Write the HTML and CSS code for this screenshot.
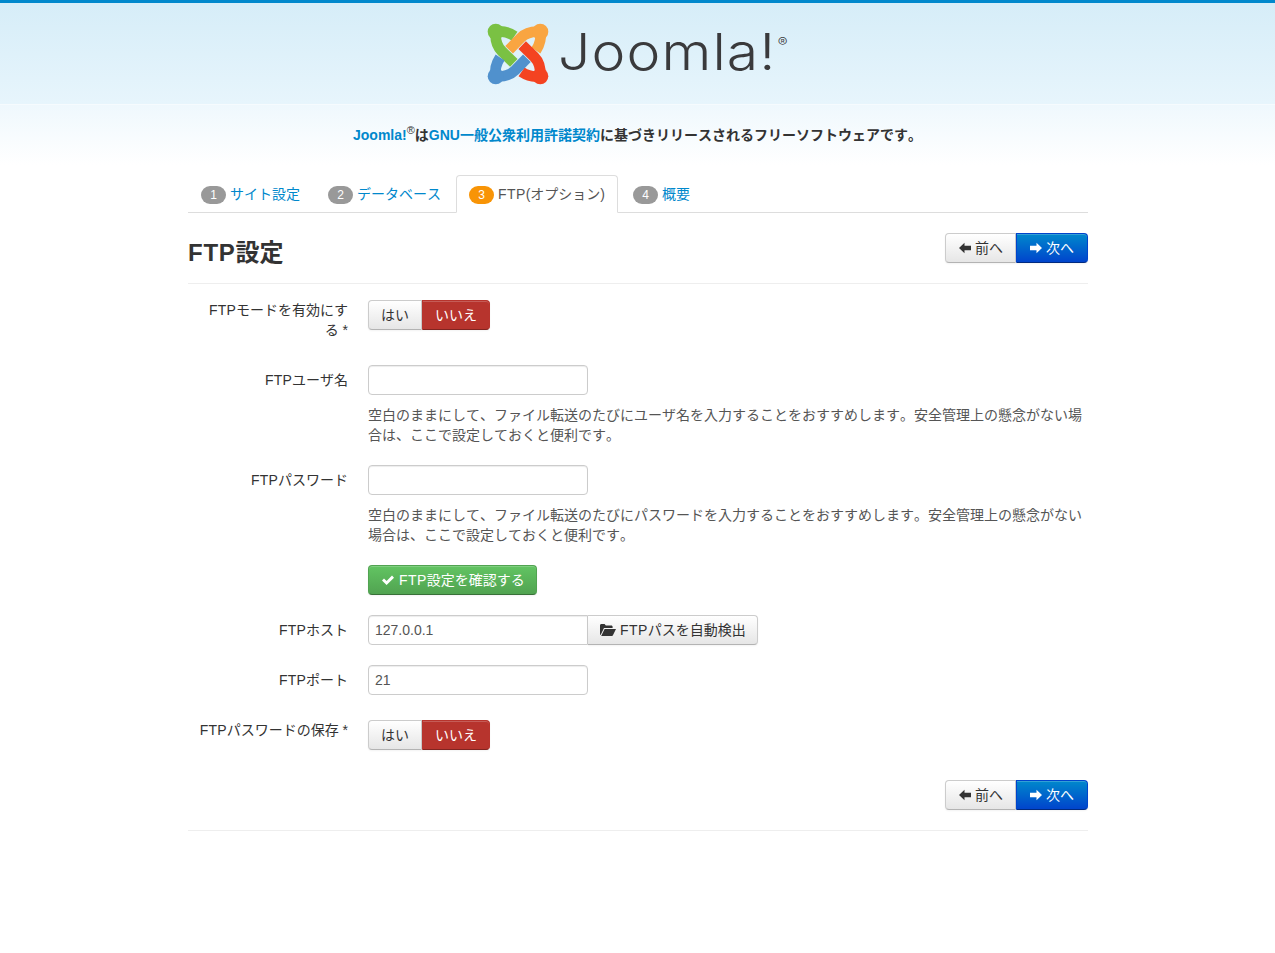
FILE: index.html
```html
<!DOCTYPE html>
<html lang="ja">
<head>
<meta charset="utf-8">
<title>Joomla! Web Installer</title>
<link rel="stylesheet" href="styles.css">
</head>
<body>
<header class="header">
  <div class="logo">
    <svg class="logo-mark" viewBox="0 0 227 227" width="76" height="76" aria-hidden="true">
      <defs>
        <g id="hook" fill="none" stroke="currentColor" stroke-width="32">
          <path d="M47,47 Q44,84 65,105 L101,140"/>
          <path d="M47,47 Q76,42 103,60"/>
          <circle cx="47" cy="47" r="24" fill="currentColor" stroke="none"/>
        </g>
      </defs>
      <use href="#hook" color="#7ac143"/>
      <use href="#hook" color="#f9a541" transform="rotate(90 113.5 113.5)"/>
      <use href="#hook" color="#f44321" transform="rotate(180 113.5 113.5)"/>
      <use href="#hook" color="#5091cd" transform="rotate(270 113.5 113.5)"/>
    </svg>
    <span class="wordmark">Joomla!<sup class="wordmark-reg">®</sup></span>
  </div>
</header>
<div class="notice">
  <p class="notice-text"><a href="#">Joomla!</a><sup class="reg">®</sup>は<a href="#">GNU一般公衆利用許諾契約</a>に基づきリリースされるフリーソフトウェアです。</p>
</div>
<main class="container">
  <ul class="tabs">
    <li class="tab"><a href="#"><span class="badge">1</span>サイト設定</a></li>
    <li class="tab"><a href="#"><span class="badge">2</span>データベース</a></li>
    <li class="tab tab-active"><a href="#"><span class="badge badge-warning">3</span><span class="ftp">FTP</span>(オプション)</a></li>
    <li class="tab"><a href="#"><span class="badge">4</span>概要</a></li>
  </ul>

  <div class="title-row">
    <h3 class="title"><span class="ftp">FTP</span>設定</h3>
    <div class="btn-group">
      <a class="btn" href="#"><svg class="icon" viewBox="0 0 14 14"><path d="M6.5 1.8 1 7l5.500 5.200V9.200H13V4.800H6.500z"/></svg>前へ</a>
      <a class="btn btn-primary" href="#"><svg class="icon" viewBox="0 0 14 14"><path d="M7.500 1.800 13 7l-5.500 5.200V9.200H1V4.800h6.500z"/></svg>次へ</a>
    </div>
  </div>
  <hr class="rule rule-top">

  <div class="group group-toggle">
    <label class="label"><span class="ftp">FTP</span>モードを有効にする&nbsp;*</label>
    <div class="controls">
      <div class="btn-group">
        <a class="btn btn-toggle" href="#">はい</a>
        <a class="btn btn-toggle btn-danger" href="#">いいえ</a>
      </div>
    </div>
  </div>

  <div class="group">
    <label class="label"><span class="ftp">FTP</span>ユーザ名</label>
    <div class="controls">
      <input class="input" type="text">
      <p class="help">空白のままにして、ファイル転送のたびにユーザ名を入力することをおすすめします。安全管理上の懸念がない場合は、ここで設定しておくと便利です。</p>
    </div>
  </div>

  <div class="group">
    <label class="label"><span class="ftp">FTP</span>パスワード</label>
    <div class="controls">
      <input class="input" type="text">
      <p class="help">空白のままにして、ファイル転送のたびにパスワードを入力することをおすすめします。安全管理上の懸念がない場合は、ここで設定しておくと便利です。</p>
    </div>
  </div>

  <div class="group">
    <div class="controls">
      <a class="btn btn-success" href="#"><svg class="icon icon-wide" viewBox="0 0 14 14"><path d="M1 7.600 3 5.500l2.600 2.600L11 2.600l2 2.100-7.400 7.400z"/></svg><span class="ftp">FTP</span>設定を確認する</a>
    </div>
  </div>

  <div class="group">
    <label class="label"><span class="ftp">FTP</span>ホスト</label>
    <div class="controls">
      <div class="input-append">
        <input class="input input-joined" type="text" value="127.0.0.1">
        <a class="btn btn-joined" href="#"><svg class="icon icon-folder" viewBox="0 0 16 14"><path d="M0 2.500C0 1.700.6 1 1.400 1h3.200l1.200 1.500h5.500c.8 0 1.300.6 1.300 1.300V5H4L.6 12 0 11.500zM4.600 6H16l-3.200 6.600c-.2.3-.5.4-.8.4H1.200z"/></svg><span class="ftp">FTP</span>パスを自動検出</a>
      </div>
    </div>
  </div>

  <div class="group">
    <label class="label"><span class="ftp">FTP</span>ポート</label>
    <div class="controls">
      <input class="input" type="text" value="21">
    </div>
  </div>

  <div class="group group-toggle group-last">
    <label class="label"><span class="ftp">FTP</span>パスワードの保存&nbsp;*</label>
    <div class="controls">
      <div class="btn-group">
        <a class="btn btn-toggle" href="#">はい</a>
        <a class="btn btn-toggle btn-danger" href="#">いいえ</a>
      </div>
    </div>
  </div>

  <div class="actions">
    <div class="btn-group">
      <a class="btn" href="#"><svg class="icon" viewBox="0 0 14 14"><path d="M6.500 1.800 1 7l5.500 5.200V9.200H13V4.800H6.500z"/></svg>前へ</a>
      <a class="btn btn-primary" href="#"><svg class="icon" viewBox="0 0 14 14"><path d="M7.500 1.800 13 7l-5.500 5.200V9.200H1V4.800h6.500z"/></svg>次へ</a>
    </div>
  </div>
  <hr class="rule rule-bottom">
</main>
</body>
</html>
```
FILE: styles.css
```css
* { box-sizing: border-box; }
html, body { margin: 0; padding: 0; }
body {
  font-family: "Liberation Sans", "Noto Sans CJK JP", sans-serif;
  font-size: 14px;
  line-height: 20px;
  color: #333;
  background: #fff;
  font-kerning: none;
}
a { text-decoration: none; color: #0088cc; }
.ftp { letter-spacing: .03em; }
.label .ftp { letter-spacing: .012em; }

.header {
  height: 105px;
  border-top: 3px solid #0088cc;
  border-bottom: 1px solid #f6fbfe;
  background: linear-gradient(#d6edf8, #e7f5fc);
  display: flex;
  justify-content: center;
}
.logo { display: flex; align-items: flex-start; width: 301px; }
.logo-mark { margin: 13px 0 0 -7px; flex: none; }
.wordmark {
  font-family: "Inter", sans-serif;
  font-weight: 350;
  font-size: 51px;
  line-height: 60px;
  color: #3a3a3c;
  margin: 19px 0 0 2px;
  letter-spacing: 1px;
  white-space: nowrap;
  transform: scaleX(1.12);
  transform-origin: left center;
}
.wordmark-reg {
  font-size: 13px;
  line-height: 13px;
  vertical-align: 23px;
  letter-spacing: 0;
  margin-left: 1px;
}

.notice {
  height: 60px;
  background: linear-gradient(#eff8fd, #fff);
  display: flex;
  justify-content: center;
  padding-top: 20px;
}
.notice-text { margin: 0; font-weight: 700; white-space: nowrap; }
.reg { font-size: 11px; line-height: 0; font-weight: 400; }

.container { width: 900px; margin: 10px auto 0 188px; }

.tabs {
  list-style: none;
  margin: 0;
  padding: 0;
  display: flex;
  gap: 2px;
  border-bottom: 1px solid #ddd;
  height: 38px;
}
.tab a {
  display: block;
  height: 38px;
  padding: 8px 12px;
  border: 1px solid transparent;
  border-radius: 4px 4px 0 0;
  white-space: nowrap;
}
.tab-active a {
  color: #555;
  background: #fff;
  border-color: #ddd #ddd #fff;
}
.badge {
  display: inline-block;
  width: 25px;
  height: 18px;
  margin-right: 4px;
  border-radius: 9px;
  background: #999;
  color: #fff;
  font-size: 12px;
  font-weight: 400;
  line-height: 18px;
  text-align: center;
  vertical-align: 0;
}
.badge-warning { background: #f89406; }

.title-row {
  display: flex;
  justify-content: space-between;
  align-items: flex-start;
  padding-top: 20px;
  height: 70px;
}
.title { margin: 0; padding-top: 5px; font-size: 24px; line-height: 30px; font-weight: 700; color: #333; }

.rule { border: 0; border-top: 1px solid #eee; margin: 0; }
.rule-top { margin-bottom: 11px; }
.rule-bottom { margin-top: 20px; }

.btn-group { display: flex; }
.btn {
  display: inline-flex;
  align-items: center;
  height: 30px;
  padding: 0 12px;
  color: #333;
  white-space: nowrap;
  background: linear-gradient(#fff, #e6e6e6);
  border: 1px solid #ccc;
  border-bottom-color: #b3b3b3;
  border-radius: 4px;
  box-shadow: inset 0 1px 0 rgba(255,255,255,.2), 0 1px 2px rgba(0,0,0,.05);
}
.btn-group .btn:first-child { border-radius: 4px 0 0 4px; }
.btn-group .btn:last-child { border-radius: 0 4px 4px 0; }
.btn-primary {
  color: #fff;
  padding-right: 13px;
  background: linear-gradient(#0088cc, #0044cc);
  border-color: #0044cc #0044cc #002a80;
}
.btn-danger {
  color: #fff;
  background: #b7342d;
  border-color: #b7342d #b7342d #802420;
}
.btn-success {
  color: #fff;
  padding-right: 11px;
  background: linear-gradient(#62c462, #51a351);
  border-color: #51a351 #51a351 #387038;
}
.icon { width: 14px; height: 14px; margin-right: 3px; fill: currentColor; flex: none; }
.icon-wide { margin-right: 4px; }
.icon-folder { width: 16px; margin-right: 4px; }

.group { display: flex; margin-bottom: 20px; }
.group-toggle { padding-top: 5px; padding-bottom: 5px; }
.group-last { padding-bottom: 0; margin-bottom: 30px; }
.label {
  width: 160px;
  flex: none;
  padding-top: 5px;
  text-align: right;
  color: #333;
}
.group-toggle .label { padding-top: 0; }
.controls { margin-left: 20px; flex: 1; min-width: 0; }
.group > .controls:first-child { margin-left: 180px; }
.input {
  display: block;
  width: 220px;
  height: 30px;
  margin: 0;
  padding: 4px 6px;
  font: inherit;
  color: #555;
  background: #fff;
  border: 1px solid #ccc;
  border-radius: 4px;
  box-shadow: inset 0 1px 1px rgba(0,0,0,.075);
  outline: 0;
}
.help { margin: 10px 0 0; color: #555; }
.input-append { display: flex; }
.input-joined { border-radius: 4px 0 0 4px; }
.btn-joined { border-left: 0; padding-right: 11px; border-radius: 0 4px 4px 0; }
.actions { display: flex; justify-content: flex-end; }
```
